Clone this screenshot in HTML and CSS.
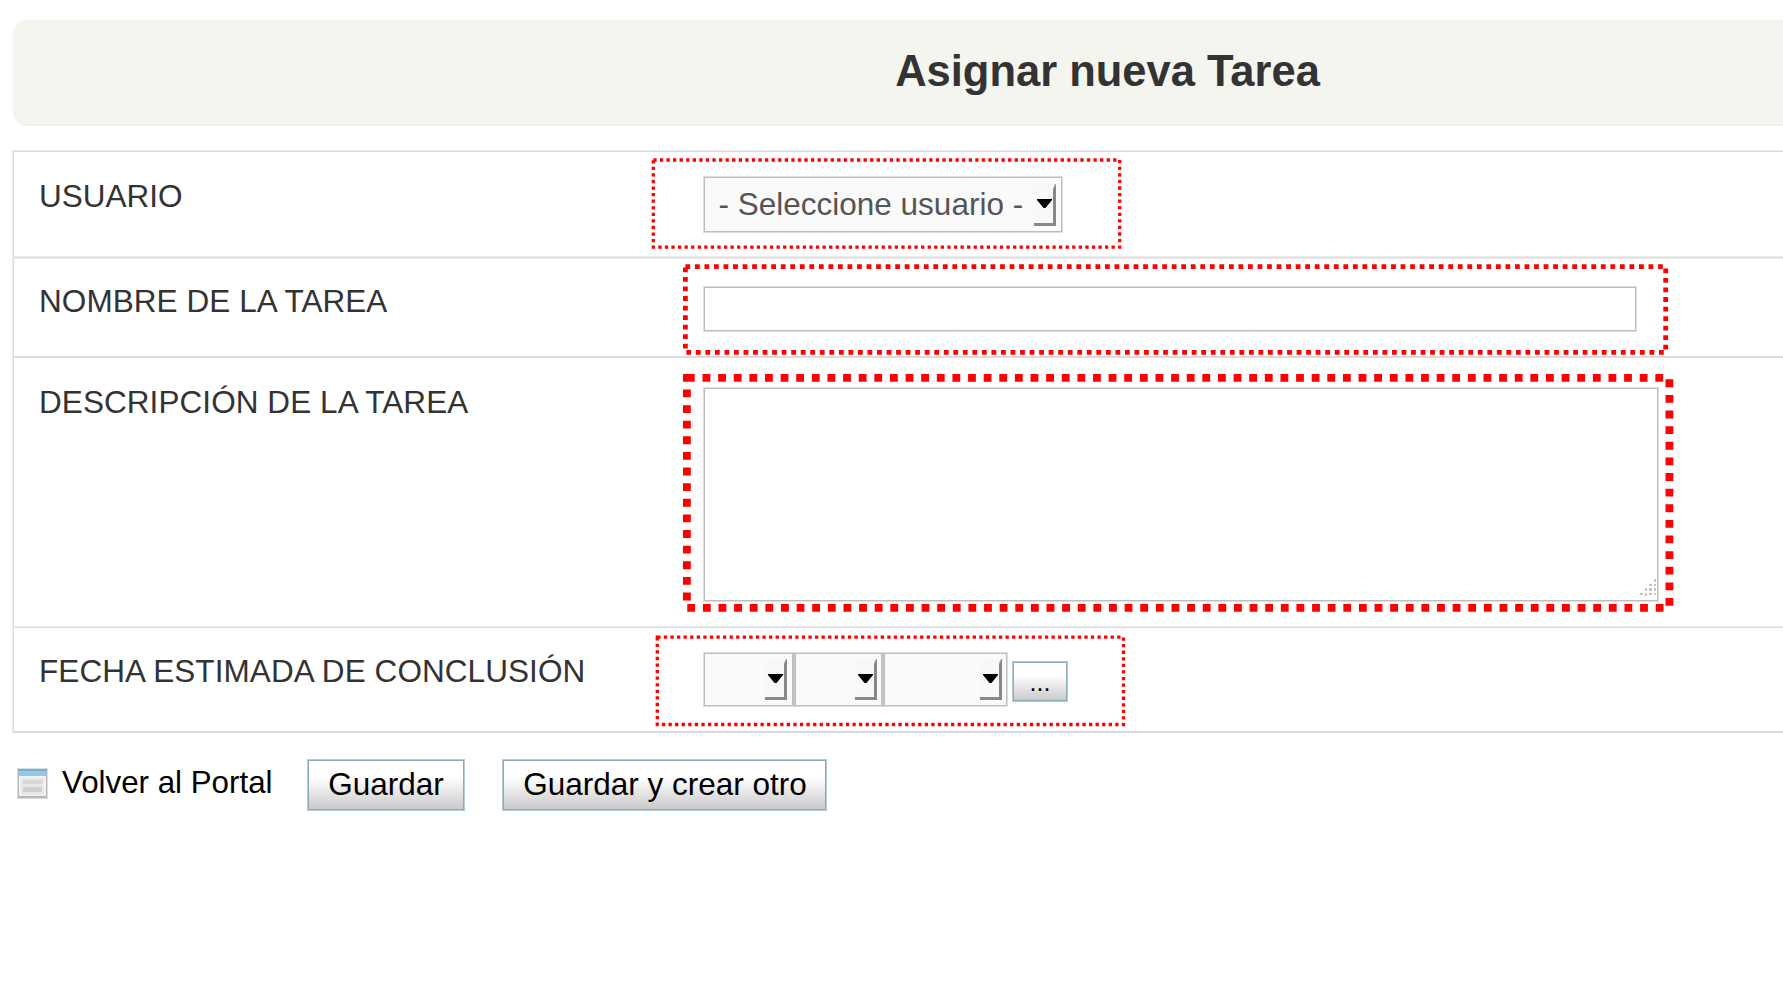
FILE: index.html
```html
<!DOCTYPE html>
<html lang="es">
<head>
<meta charset="utf-8">
<title>Asignar nueva Tarea</title>
<link rel="stylesheet" href="styles.css">
</head>
<body>
<main class="page">
  <header class="banner"><h1 class="title">Asignar nueva Tarea</h1></header>

  <section class="form">
    <div class="row row-user">
      <div class="label">USUARIO</div>
      <div class="field">
        <div class="select select-user"><span>- Seleccione usuario -</span><i class="drop"><svg width="15" height="11" viewBox="0 0 15 11"><path d="M0 0h15v1L8.500 9h-2L0 1z"/></svg></i></div>
      </div>
    </div>
    <div class="row row-name">
      <div class="label">NOMBRE DE LA TAREA</div>
      <div class="field"><input class="box input" type="text" aria-label="Nombre"></div>
    </div>
    <div class="row row-desc">
      <div class="label">DESCRIPCIÓN DE LA TAREA</div>
      <div class="field">
        <div class="box area">
          <svg class="grip" width="17" height="19" viewBox="0 0 17 19"><path d="M14 1h2v3h-2zM9 6h3v2H9zM14 6h2v2h-2zM5 10h2v3H5zM9 10h3v3H9zM14 10h2v3h-2zM0 15h3v2H0zM5 15h2v3H5zM9 15h3v2H9zM14 15h2v2h-2z"/></svg>
        </div>
      </div>
    </div>
    <div class="row row-date">
      <div class="label">FECHA ESTIMADA DE CONCLUSIÓN</div>
      <div class="field dates">
        <div class="select day"><i class="drop"><svg width="15" height="11" viewBox="0 0 15 11"><path d="M0 0h15v1L8.500 9h-2L0 1z"/></svg></i></div>
        <div class="select month"><i class="drop"><svg width="15" height="11" viewBox="0 0 15 11"><path d="M0 0h15v1L8.500 9h-2L0 1z"/></svg></i></div>
        <div class="select year"><i class="drop"><svg width="15" height="11" viewBox="0 0 15 11"><path d="M0 0h15v1L8.500 9h-2L0 1z"/></svg></i></div>
        <button class="btn btn-more">...</button>
      </div>
    </div>
  </section>

  <footer class="actions">
    <svg class="portal-icon" width="31" height="31" viewBox="0 0 31 31">
      <rect width="31" height="31" fill="#dcdfe1"/>
      <rect x="1" y="1" width="29" height="29" fill="#b5b7b8"/>
      <rect x="2" y="2" width="27" height="26" fill="#f2f2f2"/>
      <rect x="1" y="1" width="29" height="2" fill="#7badcf"/>
      <rect x="2" y="3" width="27" height="5" fill="#8ecbe8"/>
      <rect x="4" y="10" width="23" height="17" fill="#e8e8e8"/>
      <rect x="6" y="12" width="19" height="4" fill="#d8d8d8"/>
      <rect x="6" y="19" width="19" height="5" fill="#cecece"/>
    </svg>
    <span class="portal">Volver al Portal</span>
    <button class="btn btn-save">Guardar</button>
    <button class="btn btn-again">Guardar y crear otro</button>
  </footer>
</main>

<svg class="marks" width="1783" height="1003" viewBox="0 0 1783 1003">
  <rect class="thin" x="653.3" y="160" width="466.4" height="87.200"/>
  <rect class="medium" x="685.4" y="266.6" width="980.3" height="85.800"/>
  <rect class="thick" x="686.9" y="377.8" width="982.500" height="230"/>
  <rect class="thin" x="657.3" y="637.200" width="466.2" height="87.300"/>
</svg>
</body>
</html>
```
FILE: styles.css
```css
* { box-sizing: border-box; }

body {
  margin: 0;
  width: 1783px;
  height: 1003px;
  overflow: hidden;
  background: #fff;
  color: #333;
  font: 31.5px/36px "Liberation Sans", Arial, sans-serif;
}

.page { width: 2202px; padding: 19px 0 0 12px; }

.banner {
  height: 107px;
  margin: 0 0 24px 1px;
  padding-top: 27px;
  border-bottom: 2px solid #eee;
  border-radius: 15px;
  background: #f5f5f0;
  box-shadow: inset 0 1px #fafaf8;
  text-align: center;
}

.title { margin: 0; font-size: 43.5px; line-height: 50px; font-weight: bold; }

.form {
  border-left: 1px solid #eee;
  border-bottom: 2px solid #dcdcdc;
  box-shadow: inset 1px 0 #dcdcdc;
}

.row { display: flex; padding-left: 26px; border-top: 2px solid #dcdcdc; }
.label { width: 664px; padding-top: 26px; white-space: nowrap; letter-spacing: 0.07px; }

.row-user { height: 106px; border-top: 1px solid #eaeaea; box-shadow: inset 0 1px #dcdcdc; }
.row-user .label { padding-top: 27px; letter-spacing: 0; }
.row-user .field { padding-top: 25px; }
.row-name { height: 100px; border-top: 1px solid #eee; box-shadow: inset 0 1px #dcdcdc, inset 0 2px #eee; }
.row-name .field { padding-top: 29px; }
.row-desc { height: 270px; }
.row-desc .field { padding-top: 29px; }
.row-date { height: 105px; border-top: 1px solid #eee; box-shadow: inset 0 1px #dcdcdc; }
.row-date .field { padding-top: 25px; }

.box, .select {
  border: 1px solid #dedede;
  box-shadow: inset 0 0 0 1px #bebebe;
  border-radius: 0;
  background: #fff;
}
.input { display: block; width: 934px; height: 46px; outline: 0; }
.area {
  display: flex;
  align-items: flex-end;
  justify-content: flex-end;
  width: 956px;
  height: 215px;
  padding: 0 1px 4px 0;
}
.grip { fill: #c4c4c4; }

.select {
  display: flex;
  justify-content: space-between;
  align-items: flex-start;
  height: 55px;
  padding: 6px 6px 0 0;
  background: #fafafa;
  color: #555;
}
.select-user { width: 360px; height: 57px; padding: 7px 6px 0 14.5px; }
.select-user span { padding-top: 2px; }

.drop {
  display: flex;
  width: 22px;
  height: 42px;
  margin-left: auto;
  padding: 15px 0 0 3px;
  border: solid #888;
  border-width: 0 3px 3px 0;
  border-image: linear-gradient(to bottom right, #f8f8f6 50%, #888 54%) 3;
  background: #f8f8f6;
}
.drop svg { flex: none; }

.dates { display: flex; align-items: flex-start; }
.dates .drop { height: 41px; }
.day { width: 91px; border-right-color: #c4c4c4; }
.month { width: 89px; padding-right: 5px; border-left-color: #c4c4c4; border-right-color: #c4c4c4; }
.year { width: 125px; padding-right: 5px; border-left-color: #c4c4c4; }

.btn {
  padding: 0;
  border: 1px solid #b4cad4;
  box-shadow: inset 0 0 0 1px #8aacba;
  background: linear-gradient(#fff 35%, #c8c8c8);
  color: #000;
  font: inherit;
}
.btn-more { width: 56px; height: 41px; margin: 9px 0 0 4px; font-size: 25px; line-height: 36px; }

.actions { display: flex; align-items: flex-start; padding: 26px 0 0 5px; color: #000; }
.portal-icon { margin-top: 9px; }
.portal { width: 245px; margin: 6px 0 0 14px; font-size: 31.3px; }
.btn-save { width: 158px; height: 52px; margin-right: 37px; }
.btn-again { width: 325px; height: 52px; padding-left: 1px; }
.btn-save, .btn-again { padding-bottom: 2px; }

.marks { position: absolute; left: 0; top: 0; pointer-events: none; fill: none; stroke: #f00; }
.thin { stroke-width: 3.3px; stroke-dasharray: 3.285 3.285; }
.medium { stroke-width: 4.8px; stroke-dasharray: 4.768 4.768; }
.thick { stroke-width: 7.8px; stroke-dasharray: 7.81 7.81; }
```
